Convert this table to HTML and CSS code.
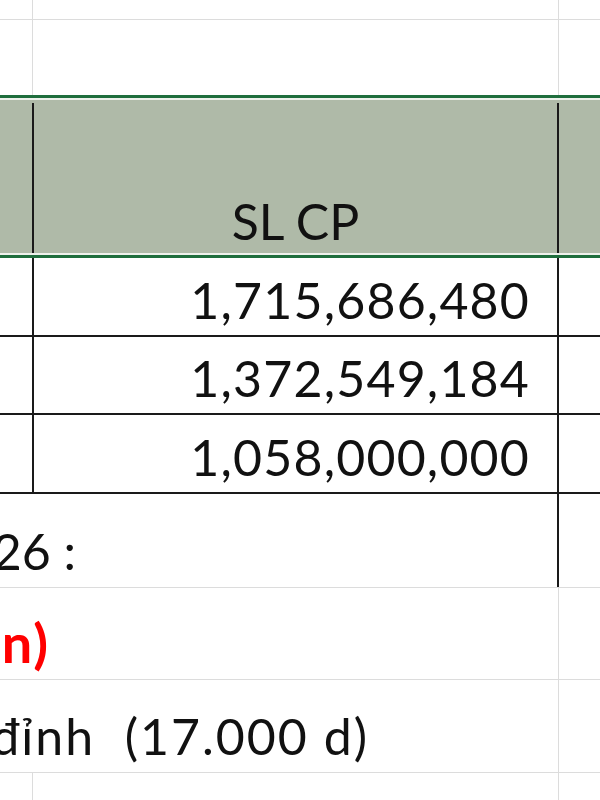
FILE: index.html
```html
<!DOCTYPE html>
<html lang="vi">
<head>
<meta charset="utf-8">
<title>Sheet</title>
<link rel="stylesheet" href="styles.css">
</head>
<body>
<div class="sheet">
  <div class="row r0"><div></div><div class="gb"></div><div></div></div>
  <div class="row r1"><div></div><div class="gb"></div><div></div></div>
  <div class="head">
    <div class="row hrow"><div></div><div class="hcell"><span>SL CP</span></div><div></div></div>
  </div>
  <div class="row drow"><div></div><div class="num"><span>1,715,686,480</span></div><div></div></div>
  <div class="row drow d2"><div></div><div class="num"><span>1,372,549,184</span></div><div></div></div>
  <div class="row drow"><div></div><div class="num"><span>1,058,000,000</span></div><div></div></div>
  <div class="row trow t1"><div class="span bk"><div class="ov w1"><span>26 :</span></div></div><div></div></div>
  <div class="row trow t2"><div class="span gr"><div class="ov w2"><span class="red">n)</span></div></div><div></div></div>
  <div class="row trow t3"><div class="span gr"><div class="ov w3"><span class="wide">đỉnh  (17.000 d)</span></div></div><div></div></div>
  <div class="row rl"><div></div><div class="gb"></div><div></div></div>
</div>
</body>
</html>
```
FILE: styles.css
```css
html, body {
  margin: 0;
  padding: 0;
  background: #ffffff;
  overflow: hidden;
}
body {
  font-family: Lato, "Noto Sans", sans-serif;
  font-size: 50px;
  color: #111111;
  width: 600px;
  height: 800px;
}
.sheet {
  width: 600px;
}
.row {
  display: grid;
  grid-template-columns: 32px 527px 41px;
  box-sizing: border-box;
}
.gb {
  border-left: 1px solid #dcdcdc;
  border-right: 1px solid #dcdcdc;
}
.r0 {
  height: 20px;
  border-bottom: 1px solid #dcdcdc;
}
.r1 {
  height: 75px;
}
.head {
  border-top: 3px solid #1f6e3d;
  border-bottom: 3px solid #1f6e3d;
  padding: 2px 0;
  background: #eef1ec;
}
.hrow {
  height: 153px;
  background: #afbaa8;
}
.hcell {
  margin-top: 3px;
  border-left: 2px solid #1a1a1a;
  border-right: 2px solid #1a1a1a;
  display: flex;
  justify-content: center;
  align-items: flex-end;
  line-height: 60px;
  padding-bottom: 2px;
}
.drow {
  height: 79px;
  border-bottom: 2px solid #1a1a1a;
}
.d2 {
  height: 78px;
}
.num {
  border-left: 2px solid #1a1a1a;
  border-right: 2px solid #1a1a1a;
  display: flex;
  justify-content: flex-end;
  align-items: flex-end;
  line-height: 60px;
  padding-right: 27px;
  padding-bottom: 5px;
  letter-spacing: 1.2px;
}
.trow {
  border-bottom: 1px solid #dcdcdc;
}
.t1 { height: 94px; }
.t2 { height: 92px; }
.t3 { height: 93px; }
.span {
  grid-column: 1 / 3;
  display: flex;
  align-items: flex-end;
  line-height: 60px;
  padding-bottom: 6px;
}
.span.bk {
  border-right: 2px solid #1a1a1a;
}
.span.gr {
  border-right: 1px solid #dcdcdc;
}
.ov {
  display: flex;
  justify-content: flex-end;
  white-space: pre;
  flex: none;
}
.w1 { width: 76px; }
.w2 { width: 50px; }
.w3 { width: 369px; }
.red {
  color: #ff0000;
  font-weight: 700;
  font-size: 54px;
  letter-spacing: 2px;
}
.wide {
  letter-spacing: 2px;
}
.rl {
  height: 27px;
}
```
